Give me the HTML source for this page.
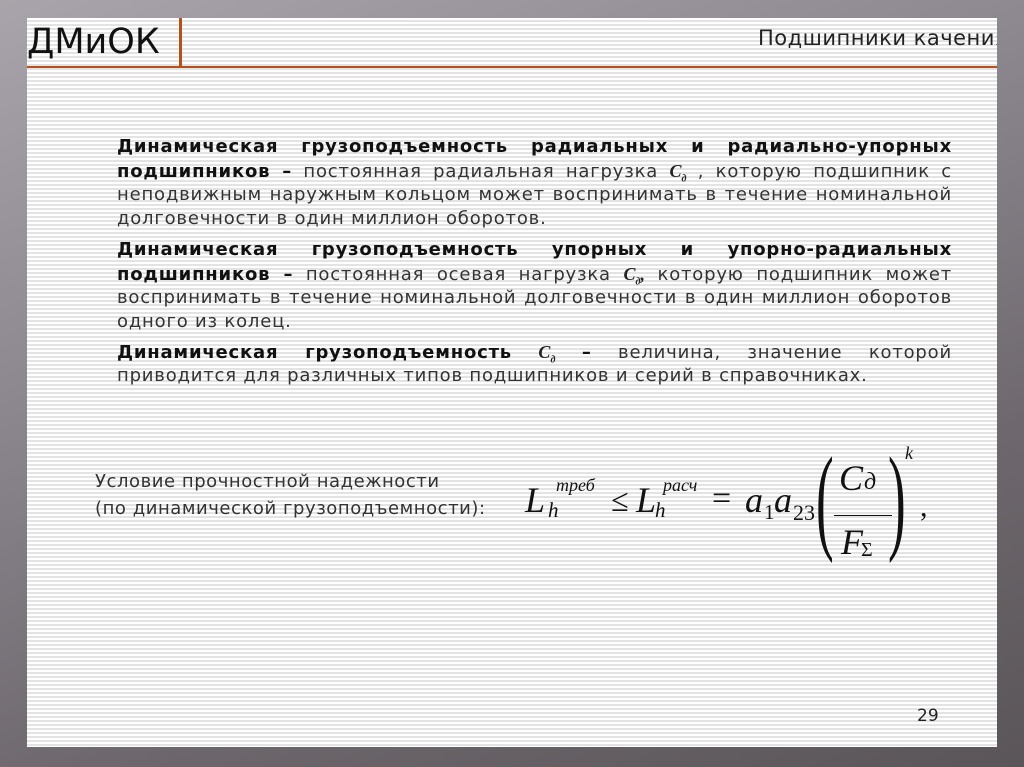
<!DOCTYPE html>
<html><head><meta charset="utf-8"><style>
html,body{margin:0;padding:0;}
body{width:1024px;height:767px;overflow:hidden;position:relative;
background:linear-gradient(160deg,#a9a4ab 0%,#8d8790 35%,#6e686e 70%,#5a5558 100%);
font-family:"DejaVu Sans","Liberation Sans",sans-serif;}
.slide{position:absolute;left:27px;top:18px;width:970px;height:729px;overflow:hidden;
background:repeating-linear-gradient(180deg,#ffffff 0px,#ffffff 2px,#e3e3e3 2px,#e3e3e3 4px);}
.hl{position:absolute;left:0;top:48px;width:970px;height:2px;background:#b5521b;}
.vl{position:absolute;left:152px;top:0;width:3px;height:50px;background:#b5521b;}
.logo{position:absolute;left:0;top:4px;font-size:35px;color:#111;}
.title{position:absolute;left:731px;top:8px;font-size:21px;letter-spacing:0.5px;color:#222;white-space:nowrap;}
.txt{position:absolute;left:90px;width:835px;font-size:18px;letter-spacing:0.8px;line-height:24px;color:#333;}
.l{display:block;text-align:justify;text-align-last:justify;white-space:nowrap;height:24px;}
.e{display:block;text-align:left;height:24px;white-space:nowrap;}
b{color:#111;}
.c{font-family:"Liberation Serif",serif;font-style:italic;font-weight:bold;font-size:18px;color:#222;letter-spacing:0;}
.c sub{font-size:10px;}
.cond{position:absolute;left:68px;top:450px;font-size:18px;letter-spacing:0.55px;line-height:27px;color:#333;}
.num{position:absolute;left:890px;top:688px;font-size:17px;color:#222;}
.f{position:absolute;font-family:"Liberation Serif",serif;font-style:italic;color:#111;line-height:1;}
</style></head><body>
<div class="slide">
<div class="logo">ДМиОК</div>
<div class="vl"></div>
<div class="title">Подшипники качения</div>
<div class="hl"></div>
<div class="txt" style="top:117px">
<span class="l"><b>Динамическая грузоподъемность радиальных и радиально-упорных</b></span>
<span class="l"><b>подшипников –</b> постоянная радиальная нагрузка <span class="c">C<sub>д</sub></span> , которую подшипник с</span>
<span class="l">неподвижным наружным кольцом может воспринимать в течение номинальной</span>
<span class="e">долговечности в один миллион оборотов.</span>
</div>
<div class="txt" style="top:220px">
<span class="l"><b>Динамическая грузоподъемность упорных и упорно-радиальных</b></span>
<span class="l"><b>подшипников –</b> постоянная осевая нагрузка <span class="c">C<sub>д</sub>,</span> которую подшипник может</span>
<span class="l">воспринимать в течение номинальной долговечности в один миллион оборотов</span>
<span class="e">одного из колец.</span>
</div>
<div class="txt" style="top:322px">
<span class="l"><b>Динамическая грузоподъемность</b> <span class="c">C<sub>д</sub></span> <b>–</b> величина, значение которой</span>
<span class="e">приводится для различных типов подшипников и серий в справочниках.</span>
</div>
<div class="cond">Условие прочностной надежности<br>(по динамической грузоподъемности):</div>
<div class="f" style="left:498px;top:464px;font-size:36px">L</div>
<div class="f" style="left:529px;top:458px;font-size:18px">треб</div>
<div class="f" style="left:521px;top:482px;font-size:21px">h</div>
<div class="f" style="left:584px;top:466px;font-size:32px;font-style:normal">≤</div>
<div class="f" style="left:609px;top:464px;font-size:36px">L</div>
<div class="f" style="left:636px;top:458px;font-size:18px">расч</div>
<div class="f" style="left:628px;top:482px;font-size:21px">h</div>
<div class="f" style="left:685px;top:464px;font-size:34px;font-style:normal">=</div>
<div class="f" style="left:718px;top:464px;font-size:36px">a</div>
<div class="f" style="left:737px;top:484px;font-size:21px;font-style:normal">1</div>
<div class="f" style="left:747px;top:464px;font-size:36px">a</div>
<div class="f" style="left:766px;top:484px;font-size:22px;font-style:normal">23</div>
<div class="f" style="left:789px;top:422px;font-size:118px;font-style:normal;transform:scaleX(0.45);transform-origin:left top;">(</div>
<div class="f" style="left:812px;top:442px;font-size:36px">C</div>
<div class="f" style="left:837px;top:452px;font-size:24px">д</div>
<div style="position:absolute;left:807px;top:497px;width:58px;height:1px;background:#111"></div>
<div class="f" style="left:814px;top:506px;font-size:36px">F</div>
<div class="f" style="left:834px;top:522px;font-size:20px;font-style:normal">Σ</div>
<div class="f" style="left:861px;top:422px;font-size:118px;font-style:normal;transform:scaleX(0.45);transform-origin:left top;">)</div>
<div class="f" style="left:878px;top:426px;font-size:18px">k</div>
<div class="f" style="left:893px;top:474px;font-size:30px;font-style:normal">,</div>
<div class="num">29</div>
</div>
</body></html>
